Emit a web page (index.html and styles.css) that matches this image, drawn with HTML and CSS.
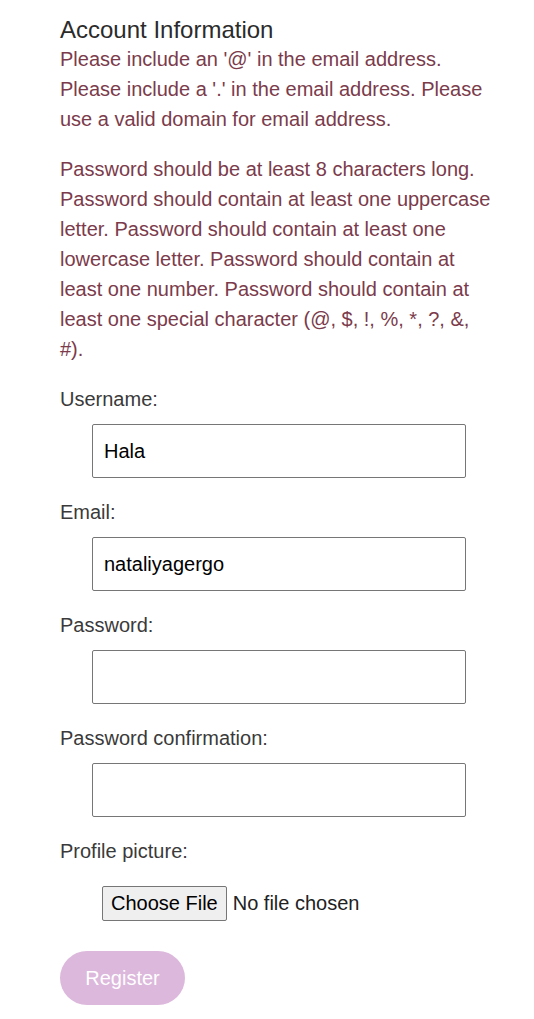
FILE: index.html
```html
<!DOCTYPE html>
<html lang="en">
<head>
<meta charset="utf-8">
<title>Account Information</title>
<link rel="stylesheet" href="styles.css">
</head>
<body>
<div class="page">
  <h2 class="title">Account Information</h2>
  <p class="error">Please include an '@' in the email address. Please include a '.' in the email address. Please use a valid domain for email address.</p>
  <p class="error gap">Password should be at least 8 characters long. Password should contain at least one uppercase letter. Password should contain at least one lowercase letter. Password should contain at least one number. Password should contain at least one special character (@, $, !, %, *, ?, &amp;, #).</p>
  <form class="form">
    <div class="field">
      <label class="label" for="username">Username:</label>
      <input class="input" id="username" type="text" value="Hala">
    </div>
    <div class="field">
      <label class="label" for="email">Email:</label>
      <input class="input" id="email" type="text" value="nataliyagergo">
    </div>
    <div class="field">
      <label class="label" for="password">Password:</label>
      <input class="input" id="password" type="password">
    </div>
    <div class="field">
      <label class="label" for="confirm">Password confirmation:</label>
      <input class="input" id="confirm" type="password">
    </div>
    <div class="field file-field">
      <label class="label" for="picture">Profile picture:</label>
      <input class="file" id="picture" type="file">
    </div>
    <button class="register" type="button">Register</button>
  </form>
</div>
</body>
</html>
```

FILE: styles.css
```css
html, body {
  margin: 0;
  padding: 0;
  background: #ffffff;
}

body {
  font-family: "Liberation Sans", Arial, sans-serif;
  font-size: 20px;
  color: #3a3a3a;
}

.page {
  padding: 16px 40px 0 60px;
}

.title {
  margin: 0;
  font-size: 24px;
  font-weight: normal;
  line-height: 28px;
  color: #2b2b2b;
}

.error {
  margin: 0;
  line-height: 30px;
  color: #7b3b4b;
}

.error.gap {
  margin-top: 20px;
}

.form {
  margin-top: 20px;
}

.field {
  display: flex;
  flex-direction: column;
  align-items: flex-start;
  margin-bottom: 19px;
}

.label {
  line-height: 30px;
  color: #3a3a3a;
}

.input {
  box-sizing: border-box;
  margin: 10px 0 0 32px;
  width: 374px;
  height: 54px;
  padding: 0 11px;
  border: 1px solid #767676;
  border-radius: 2px;
  font-family: "Liberation Sans", Arial, sans-serif;
  font-size: 20px;
  color: #000;
  background: #fff;
}

.file-field {
  margin-bottom: 0;
}

.file {
  margin: 10px 0 0 32px;
  padding: 10px;
  font-family: "Liberation Sans", Arial, sans-serif;
  font-size: 20px;
  color: #222;
  line-height: 23px;
}

.file::file-selector-button {
  font-family: "Liberation Sans", Arial, sans-serif;
  font-size: 20px;
  line-height: 23px;
  padding: 5px 8px;
  margin-right: 6px;
  border: 1px solid #767676;
  border-radius: 2px;
  background: #efefef;
  color: #000;
}

.register {
  margin-top: 20px;
  width: 125px;
  height: 54px;
  border: none;
  border-radius: 27px;
  background: #dcb8dc;
  color: #ffffff;
  font-family: "Liberation Sans", Arial, sans-serif;
  font-size: 20px;
  padding: 0;
}
```
